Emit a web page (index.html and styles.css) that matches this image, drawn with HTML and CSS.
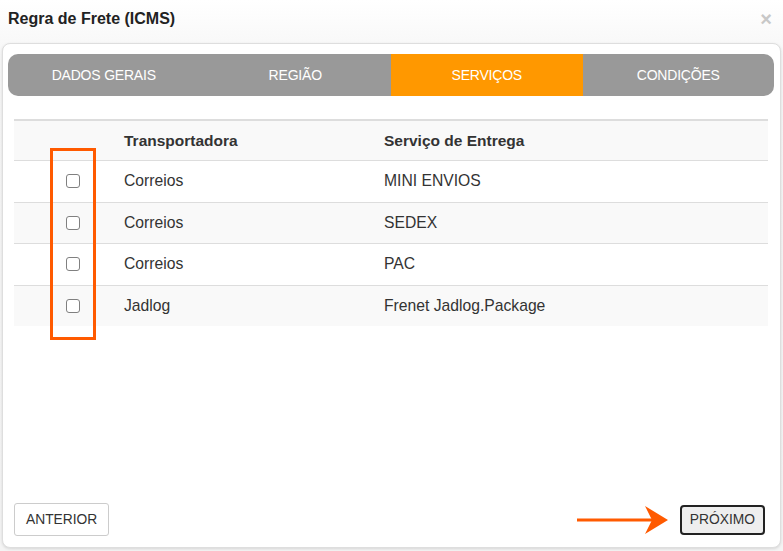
FILE: index.html
```html
<!DOCTYPE html>
<html lang="pt-BR">
<head>
    <meta charset="UTF-8">
    <meta name="viewport" content="width=device-width, initial-scale=1.0">
    <title>Regra de Frete (ICMS)</title>
    <link rel="stylesheet" href="styles.css">
</head>
<body>
    <!-- Modal header -->
    <div class="modal-header">
        <h1 class="modal-title">Regra de Frete (ICMS)</h1>
        <span class="close">&times;</span>
    </div>

    <div class="card">
        <!-- Wizard tabs -->
        <div class="tabs">
            <div class="tab">DADOS GERAIS</div>
            <div class="tab">REGIÃO</div>
            <div class="tab active">SERVIÇOS</div>
            <div class="tab">CONDIÇÕES</div>
        </div>

        <table class="services">
            <thead>
                <tr>
                    <th class="col-check"></th>
                    <th class="col-carrier">Transportadora</th>
                    <th>Serviço de Entrega</th>
                </tr>
            </thead>
            <tbody>
                <tr>
                    <td class="col-check"><input type="checkbox"></td>
                    <td>Correios</td>
                    <td>MINI ENVIOS</td>
                </tr>
                <tr>
                    <td class="col-check"><input type="checkbox"></td>
                    <td>Correios</td>
                    <td>SEDEX</td>
                </tr>
                <tr>
                    <td class="col-check"><input type="checkbox"></td>
                    <td>Correios</td>
                    <td>PAC</td>
                </tr>
                <tr>
                    <td class="col-check"><input type="checkbox"></td>
                    <td>Jadlog</td>
                    <td>Frenet Jadlog.Package</td>
                </tr>
            </tbody>
        </table>

        <!-- annotation box over the checkbox column -->
        <div class="highlight"></div>

        <div class="footer">
            <button class="btn">ANTERIOR</button>
            <div class="next-group">
                <svg class="arrow" width="92" height="30" viewBox="0 0 92 30">
                    <line x1="0" y1="15" x2="76" y2="15" stroke="#ff5a00" stroke-width="3"/>
                    <polygon points="68,1 91,15 68,29 75,15" fill="#ff5a00"/>
                </svg>
                <button class="btn btn-next">PRÓXIMO</button>
            </div>
        </div>
    </div>
</body>
</html>
```

FILE: styles.css
```css
* {
    box-sizing: border-box;
}

body {
    margin: 0;
    height: 551px;
    overflow: hidden;
    background: linear-gradient(#ffffff, #f6f6f6 60px, #f4f4f4);
    font-family: "Liberation Sans", Arial, sans-serif;
    color: #333;
}

.modal-header {
    height: 43px;
    display: flex;
    align-items: center;
    justify-content: space-between;
    padding: 0 11px 5px 8px;
}

.modal-title {
    margin: 0;
    font-size: 16px;
    font-weight: bold;
    color: #222;
}

.close {
    font-size: 20px;
    font-weight: bold;
    color: #c8c8c8;
    line-height: 1;
}

.card {
    position: relative;
    display: flex;
    flex-direction: column;
    height: 505px;
    margin: 0 2px 0 2px;
    padding: 10px 6px 11px 5px;
    background: #fff;
    border: 1px solid #dedede;
    border-radius: 8px;
    box-shadow: 0 1px 3px rgba(0, 0, 0, 0.12);
}

.tabs {
    display: grid;
    grid-template-columns: repeat(4, 1fr);
    height: 42px;
    background: #999;
    border-radius: 10px;
    overflow: hidden;
}

.tab {
    display: flex;
    align-items: center;
    justify-content: center;
    color: #fff;
    font-size: 14px;
    letter-spacing: -0.2px;
}

.tab.active {
    background: #ff9800;
}

.services {
    margin: 23px 6px 0 6px;
    border-collapse: collapse;
    font-size: 15.7px;
}

.services th {
    text-align: left;
    font-size: 15.5px;
    font-weight: bold;
    padding: 11px 8px;
    line-height: 17px;
    border-top: 2px solid #ddd;
    background: #f9f9f9;
}

.services td {
    padding: 12px 8px;
    line-height: 16.5px;
    border-top: 1px solid #ddd;
}

.services tbody tr:nth-child(even) {
    background: #f9f9f9;
}

.services .col-check {
    width: 102px;
    padding-left: 52px;
}

.services .col-carrier {
    width: 260px;
}

.services td.col-check {
    padding-top: 0;
    padding-bottom: 0;
}

input[type="checkbox"] {
    appearance: none;
    display: block;
    width: 14px;
    height: 14px;
    margin: 0;
    border: 1px solid #808080;
    border-radius: 3px;
    background: #fff;
}

.highlight {
    position: absolute;
    left: 47px;
    top: 104px;
    width: 46px;
    height: 192px;
    border: 3px solid #ff5a00;
}

.footer {
    margin-top: auto;
    display: flex;
    align-items: center;
    justify-content: space-between;
    padding: 0 9px 0 6px;
}

.next-group {
    display: flex;
    align-items: center;
    gap: 11px;
}

.btn {
    font-family: "Liberation Sans", Arial, sans-serif;
    font-size: 13.8px;
    color: #333;
    background: #fff;
    border: 1px solid #ccc;
    border-radius: 3px;
    height: 33px;
    padding: 0 11px;
}

.btn-next {
    height: 30px;
    padding: 0 8px;
    background: #eee;
    border: 2px solid #222;
    border-radius: 4px;
}
```
